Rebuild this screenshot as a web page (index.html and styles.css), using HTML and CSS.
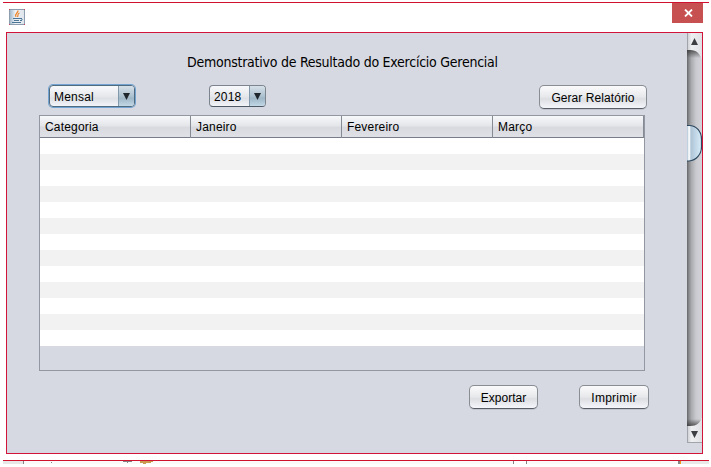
FILE: index.html
```html
<!DOCTYPE html>
<html lang="pt-BR">
<head>
<meta charset="utf-8">
<title>Demonstrativo de Resultado</title>
<link rel="stylesheet" href="styles.css">
</head>
<body>
<main class="window">
  <header class="titlebar">
    <svg class="java-icon" width="16" height="16" viewBox="0 0 16 16">
      <defs><linearGradient id="ig" x2="1" y2="0"><stop stop-color="#9db6c8"/><stop offset=".4" stop-color="#eef2f5"/><stop offset="1" stop-color="#dde4ea"/></linearGradient></defs>
      <rect x=".5" y=".5" width="15" height="15" fill="url(#ig)" stroke="#8d9fae"/>
      <path d="M9 1.500C9.500 4 5 4.500 7 8M10.500 4C8 5 9.500 6 8.500 8" fill="none" stroke="#ee8428" stroke-width="1.200"/>
      <path d="M4 9h7v1H4zM5 11h5v1H5zM3 13h9v1H3zM11 9h2v1h-2zM12.500 10h1v1h-1zM11 11h2v1h-2z" fill="#4a7595"/>
      <path d="M0 0h1v1H0zM15 0h1v1h-1zM0 15h1v1H0zM15 15h1v1h-1z" fill="#c8475c"/>
    </svg>
    <button class="close" aria-label="Fechar"><svg width="9" height="8" viewBox="0 0 9 8"><path d="M1 .5l7 7M8 .5l-7 7" stroke="#fff" stroke-width="1.800"/></svg></button>
  </header>
  <div class="frame">
    <section class="panel">
      <h1>Demonstrativo de Resultado do Exercício Gerencial</h1>
      <div class="filters">
        <div class="combo period focused"><span>Mensal</span><i><svg width="7" height="7"><path d="M0 0h7L3.500 7z" fill="#20272c"/></svg></i></div>
        <div class="combo year"><span>2018</span><i><svg width="7" height="7"><path d="M0 0h7L3.500 7z" fill="#20272c"/></svg></i></div>
        <button class="btn generate">Gerar Relatório</button>
      </div>
      <div class="table">
        <div class="thead"><span>Categoria</span><span>Janeiro</span><span>Fevereiro</span><span>Março</span></div>
        <div class="rows"></div>
      </div>
      <div class="actions"><button class="btn export">Exportar</button><button class="btn print">Imprimir</button></div>
    </section>
    <svg class="scrollbar" width="15" height="410" viewBox="0 0 15 410">
      <defs>
        <linearGradient id="track"><stop stop-color="#65666a"/><stop offset=".13" stop-color="#898a8e"/><stop offset=".3" stop-color="#abacb0"/><stop offset=".6" stop-color="#c9cacf"/><stop offset="1" stop-color="#d4d5db"/></linearGradient>
        <linearGradient id="button"><stop stop-color="#c9cbcf"/><stop offset=".3" stop-color="#eeeff1"/><stop offset="1" stop-color="#dfe1e5"/></linearGradient>
        <linearGradient id="thumb"><stop stop-color="#a9bfd2"/><stop offset=".12" stop-color="#f5f8fa"/><stop offset=".2" stop-color="#f3f7fa"/><stop offset=".26" stop-color="#aec4d6"/><stop offset="1" stop-color="#d8edfa"/></linearGradient>
        <linearGradient id="shade" x2="0" y2="1"><stop stop-color="#333" stop-opacity=".75"/><stop offset="1" stop-color="#333" stop-opacity="0"/></linearGradient>
        <linearGradient id="shadeUp" x2="0" y2="1"><stop stop-color="#333" stop-opacity="0"/><stop offset="1" stop-color="#333" stop-opacity=".75"/></linearGradient>
      </defs>
      <path d="M0 0h15v410H0z" fill="url(#track)"/>
      <path d="M0 17h15v8H0z" fill="url(#shade)"/>
      <path d="M0 386h15v7H0z" fill="url(#shadeUp)"/>
      <path d="M0 0h15v27C13 21 10 17 3 17H0z" fill="url(#button)"/>
      <path d="M0 393h3c7 0 10-3 12-9v26H0z" fill="url(#button)"/>
      <path d="M.5 0v17M.5 393v17M0 409.500h15" stroke="#a1a4ab"/>
      <path d="M4 12h7L7.500 5zM4 398h7L7.500 405z" fill="#3d3f42"/>
      <path d="M0 92.500h2C10 92.500 14.500 99 14.500 106v8c0 7-5 13.500-12.500 14H0z" fill="url(#thumb)"/>
      <path d="M0 92.500h2C10 92.500 14.500 99 14.500 106v8c0 7-5 13.500-12.500 14H0" fill="none" stroke="#2d485f" stroke-width="1.200"/>
    </svg>
  </div>
</main>
<svg class="below" width="711" height="3" viewBox="0 0 711 3">
  <path d="M3 0h20v3H3z" fill="#e7e7e7"/><path d="M24 0h489v3H24zM526 0h152v3H526z" fill="#fafafa"/><path d="M681 0h28v3h-28z" fill="#e9e9e9"/>
  <path d="M23 0h1v3h-1zM51 1h1v1h-1zM123 0h9v1h-9zM127 1h1v1h-1zM513 0h1v3h-1zM526 0h1v3h-1zM678 0h2v3h-2z" fill="#858585"/>
  <path d="M140 0h13v1h-2v1h-5v1h-3v-1h-3z" fill="#c99a50"/><path d="M680 0h1v3h-1z" fill="#f29b18"/>
</svg>
</body>
</html>
```
FILE: styles.css
```css
* { box-sizing: border-box; }
body { margin: 0; padding-top: 2px; background: #fff; color: #000; font: 12px "Liberation Sans", Arial, sans-serif; overflow: hidden; }
.window { width: 706px; height: 459px; margin-left: 3px; border: solid #d0122f; border-width: 1px 0; }
.titlebar { height: 29px; display: flex; justify-content: space-between; padding: 0 6px; }
.java-icon { margin-top: 6px; }
.close { width: 31px; height: 20px; padding: 0 0 0 1px; border: 0; background: #c75050; display: flex; align-items: center; justify-content: center; }
.frame { width: 697px; height: 422px; margin-left: 3px; display: flex; border: 1px solid #d11437; background: #d6d9e1; }
.panel { width: 680px; padding: 18px 0 0 32px; }
h1 { margin: 0; width: 620px; padding-left: 148px; height: 22px; font: 14px/22px "DejaVu Sans Condensed", "DejaVu Sans", sans-serif; font-stretch: condensed; letter-spacing: -.25px; white-space: nowrap; }
.filters { display: flex; height: 42px; padding: 12px 0 0 10px; }
.combo { display: flex; height: 22px; border: 1px solid #7c848d; border-bottom-color: #4d5965; border-radius: 4px; background: linear-gradient(#f8f9fb, #e4e6ea 55%, #dcdfe4 60%, #f2f4f8); overflow: hidden; }
.combo span { flex: 1; padding-left: 4px; line-height: 22px; letter-spacing: .2px; }
.combo i { width: 16px; border-left: 1px solid #8199ab; background: linear-gradient(#d6e0e8, #a9bfce 55%, #9db5c5 60%, #c2d8e7); display: flex; align-items: center; justify-content: center; }
.period { width: 86px; margin-right: 74px; }
.focused { border-color: #506a80; box-shadow: 0 0 0 1px #73a4d1; }
.year { width: 57px; margin-right: 273px; }
.btn { height: 24px; padding: 1px 0 0; border: 1px solid #898d94; border-bottom-color: #585d65; border-radius: 5px; background: linear-gradient(#fbfbfc, #e7e8eb 50%, #dcdee2 58%, #f4f6fb); box-shadow: 0 1px 0 #c2c5ce; font: inherit; color: #000; }
.generate { width: 108px; letter-spacing: .08px; }
.table { width: 606px; height: 256px; border: 1px solid #9297a1; }
.thead { display: grid; grid-template-columns: 151px 151px 151px 151px; height: 22px; border-bottom: 1px solid #777e88; background: linear-gradient(#f7f8fa, #e5e6ea 45%, #d8dadf 55%, #dfe1e6); line-height: 22px; letter-spacing: .18px; }
.thead span { padding-left: 5px; border-right: 1px solid #858b95; }
.rows { height: 208px; background: repeating-linear-gradient(#fff 0 16px, #f2f2f2 16px 32px); }
.actions { display: flex; gap: 41px; padding: 14px 0 0 430px; }
.export { width: 69px; }
.print { width: 70px; letter-spacing: .25px; }
.below { display: block; }
```
